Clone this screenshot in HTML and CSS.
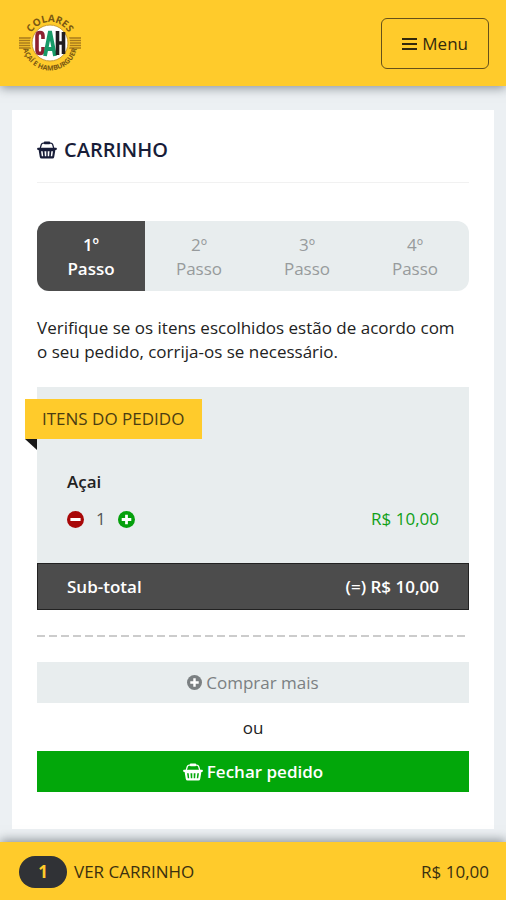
FILE: index.html
```
<!DOCTYPE html>
<html lang="pt-BR">
<head>
  <meta charset="UTF-8">
  <meta name="viewport" content="width=device-width, initial-scale=1.0">
  <title>Carrinho</title>
  <link rel="stylesheet" href="styles.css">
</head>
<body>

  <!-- shared icons -->
  <svg class="sprite" aria-hidden="true">
    <symbol id="basket" viewBox="0 0 22 20">
      <path d="M3.500 8L4.600 4.200Q5.200 2.300 7 2.300H15Q16.800 2.300 17.400 4.200L18.500 8" fill="none" stroke="currentColor" stroke-width="1.400"/>
      <rect x="7.500" y="0.600" width="7" height="3" rx="1" fill="currentColor"/>
      <path fill="currentColor" fill-rule="evenodd" d="M1 7.500H21Q22 7.500 22 8.700Q22 10 20.800 10H20.300L19 17.800Q18.700 19.500 17 19.500H5Q3.300 19.500 3 17.800L1.700 10H1.200Q0 10 0 8.700Q0 7.500 1 7.500ZM4.400 11.500L5.200 17H6.800L6.200 11.500ZM8.200 11.500L8.600 17H10.200V11.500ZM11.800 11.500V17H13.400L13.800 11.500ZM15.800 11.500L15.200 17H16.800L17.600 11.500Z"/>
    </symbol>
    <symbol id="plus" viewBox="0 0 16 16">
      <circle cx="8" cy="8" r="8" fill="currentColor"/>
      <path class="mark" d="M8 3.500V12.500M3.500 8H12.500" stroke-width="2.600"/>
    </symbol>
    <symbol id="minus" viewBox="0 0 16 16">
      <circle cx="8" cy="8" r="8" fill="currentColor"/>
      <path class="mark" d="M3.200 8H12.800" stroke-width="2.800"/>
    </symbol>
  </svg>

  <header class="topbar">
    <a href="#" class="logo" aria-label="Colares CAH">
      <svg viewBox="0 0 62 62" width="62" height="62">
        <defs>
          <path id="arcTop" d="M10 31A21 21 0 0 1 52 31"/>
          <path id="arcBottom" d="M3.500 31A27.500 27.500 0 0 0 58.500 31"/>
        </defs>
        <path d="M0 26H62M0 28.500H62M0 31H62M0 33.500H62M0 36H62" stroke="#a87b1c" stroke-width="1.300"/>
        <circle cx="31" cy="31" r="20" fill="#ffcb2b"/>
        <circle cx="31" cy="31" r="18" fill="#fff" stroke="#c99a2c" stroke-width="1"/>
        <text class="logo-arc" font-size="10"><textPath href="#arcTop" startOffset="50%" text-anchor="middle">COLARES</textPath></text>
        <text class="logo-arc" font-size="7"><textPath href="#arcBottom" startOffset="50%" text-anchor="middle">AÇAÍ E HAMBURGUER</textPath></text>
        <g fill="none" stroke-width="3.600">
          <path d="M24 27V24Q24 20.500 21 20.500Q18 20.500 18 24V38Q18 41.500 21 41.500Q24 41.500 24 38V35" stroke="#8c2031"/>
          <path d="M26 44L31 19L36 44M27.500 37H34.500" stroke="#179b68" stroke-width="3.800"/>
          <path d="M38.500 19V43M44.500 20V42M38.500 31H44.500" stroke="#211d20"/>
        </g>
      </svg>
    </a>
    <button type="button" class="menu-btn">
      <svg viewBox="0 0 15 14" width="15" height="14" aria-hidden="true">
        <path d="M0 2H15M0 7H15M0 12H15" stroke="currentColor" stroke-width="2"/>
      </svg>
      Menu
    </button>
  </header>

  <main class="page">
    <section class="card">
      <h1 class="title">
        <svg class="basket" aria-hidden="true"><use href="#basket"/></svg>
        CARRINHO
      </h1>

      <ol class="steps">
        <li class="step active">1º<br>Passo</li>
        <li class="step">2º<br>Passo</li>
        <li class="step">3º<br>Passo</li>
        <li class="step">4º<br>Passo</li>
      </ol>

      <p class="info">Verifique se os itens escolhidos estão de acordo com o seu pedido, corrija-os se necessário.</p>

      <div class="order">
        <h2 class="ribbon">ITENS DO PEDIDO</h2>
        <div class="item">
          <h3 class="item-name">Açai</h3>
          <div class="item-row">
            <div class="qty">
              <button type="button" class="qty-btn less" aria-label="Remover um">
                <svg aria-hidden="true"><use href="#minus"/></svg>
              </button>
              <span>1</span>
              <button type="button" class="qty-btn more" aria-label="Adicionar um">
                <svg aria-hidden="true"><use href="#plus"/></svg>
              </button>
            </div>
            <span class="price">R$ 10,00</span>
          </div>
        </div>
        <div class="subtotal">
          <span>Sub-total</span>
          <span>(=) R$ 10,00</span>
        </div>
      </div>

      <hr class="divider">

      <div class="actions">
        <button type="button" class="btn btn-light">
          <svg class="plus" aria-hidden="true"><use href="#plus"/></svg>
          Comprar mais
        </button>
        <p class="or">ou</p>
        <button type="button" class="btn btn-green">
          <svg class="basket" aria-hidden="true"><use href="#basket"/></svg>
          Fechar pedido
        </button>
      </div>
    </section>
  </main>

  <footer class="cartbar">
    <a href="#" class="cart-link"><span class="badge">1</span>VER CARRINHO</a>
    <span>R$ 10,00</span>
  </footer>

</body>
</html>
```

FILE: styles.css
```
* { box-sizing: border-box; margin: 0; padding: 0; }

body {
  font-family: 'Open Sans', sans-serif;
  font-size: 17px;
  line-height: 24px;
  color: #222;
  background: #ecf0f3;
  min-height: 100vh;
  display: flex;
  flex-direction: column;
}

button {
  font: inherit;
  border: none;
  cursor: pointer;
}

a { color: inherit; text-decoration: none; }

.sprite { display: none; }

.topbar {
  position: sticky;
  top: 0;
  z-index: 2;
  display: flex;
  align-items: center;
  justify-content: space-between;
  height: 86px;
  padding: 0 17px 0 19px;
  background: #ffcb2b;
  box-shadow: 0 2px 10px rgba(40, 50, 60, 0.5);
}

.logo { display: flex; }

.logo svg { overflow: visible; }

.logo-arc {
  font-family: 'Open Sans', sans-serif;
  font-weight: 700;
  fill: #7a5812;
}

.menu-btn {
  display: flex;
  align-items: center;
  justify-content: center;
  gap: 5px;
  height: 51px;
  padding: 2px 20px 0;
  color: #33290c;
  background: none;
  border: 1px solid #66511a;
  border-radius: 6px;
}

.page {
  flex: 1;
  padding: 24px 12px 13px;
}

.card {
  background: #fff;
  padding: 0 25px 37px;
}

.title {
  display: flex;
  align-items: center;
  gap: 7px;
  height: 73px;
  padding-top: 7px;
  font-size: 20px;
  font-weight: 600;
  color: #181d38;
  border-bottom: 1px solid #f1f1f1;
}

.basket {
  width: 20px;
  height: 18px;
}

.steps {
  display: flex;
  list-style: none;
  margin-top: 38px;
  background: #e8edee;
  border-radius: 12px;
  overflow: hidden;
}

.step {
  flex: 1;
  padding: 12px 0 10px;
  text-align: center;
  color: #979b9c;
}

.step.active {
  color: #fff;
  background: #4c4c4c;
  font-weight: 600;
}

.info { margin-top: 25px; }

.order {
  margin-top: 23px;
  padding-top: 12px;
  background: #e8edee;
}

/* sticks out of the box on the left, with a folded corner */
.ribbon {
  position: relative;
  width: fit-content;
  margin-left: -12px;
  padding: 8px 18px 8px 17px;
  font-size: 17px;
  font-weight: 400;
  line-height: 24px;
  color: #4b3d12;
  background: #ffcb2b;
}

.ribbon::after {
  content: "";
  position: absolute;
  top: 100%;
  left: 0;
  border-top: 11px solid #181818;
  border-left: 12px solid transparent;
}

.item { padding: 31px 30px 32px; }

.item-name {
  font-size: 17px;
  font-weight: 600;
}

.item-row {
  display: flex;
  align-items: center;
  justify-content: space-between;
  margin-top: 13px;
}

.qty {
  display: flex;
  align-items: center;
  gap: 12px;
  color: #555;
}

.qty-btn {
  display: flex;
  background: none;
}

.qty-btn svg {
  width: 17px;
  height: 17px;
}

.mark { stroke: #fff; }

.less { color: #a80808; }
.more { color: #05a00c; }
.price { color: #10a017; }

.subtotal {
  display: flex;
  justify-content: space-between;
  padding: 11px 29px 10px;
  font-weight: 600;
  color: #fff;
  background: #4c4c4c;
  border: 1px solid #222;
}

.divider {
  height: 2px;
  margin: 25px 0;
  border: none;
  background: repeating-linear-gradient(90deg, #ccc 0 8px, transparent 8px 12px);
}

.actions { text-align: center; }

.btn {
  display: flex;
  align-items: center;
  justify-content: center;
  gap: 4px;
  width: 100%;
  height: 41px;
}

.btn-light {
  color: #7b8082;
  background: #e8edee;
}

.btn-green {
  color: #fff;
  background: #02a70a;
  font-weight: 600;
}

.plus {
  width: 15px;
  height: 15px;
}

.or {
  padding-top: 1px;
  margin: 12px 0 11px;
}

.cartbar {
  position: sticky;
  bottom: 0;
  display: flex;
  align-items: center;
  justify-content: space-between;
  height: 58px;
  padding: 2px 17px 0 19px;
  color: #3b300f;
  background: #ffcb2b;
  box-shadow: 0 -2px 10px rgba(40, 50, 60, 0.5);
}

.cart-link {
  display: flex;
  align-items: center;
  gap: 7px;
}

.badge {
  width: 48px;
  padding: 4px 0;
  border-radius: 16px;
  text-align: center;
  font-weight: 700;
  color: #ffcb2b;
  background: #303236;
}
```
